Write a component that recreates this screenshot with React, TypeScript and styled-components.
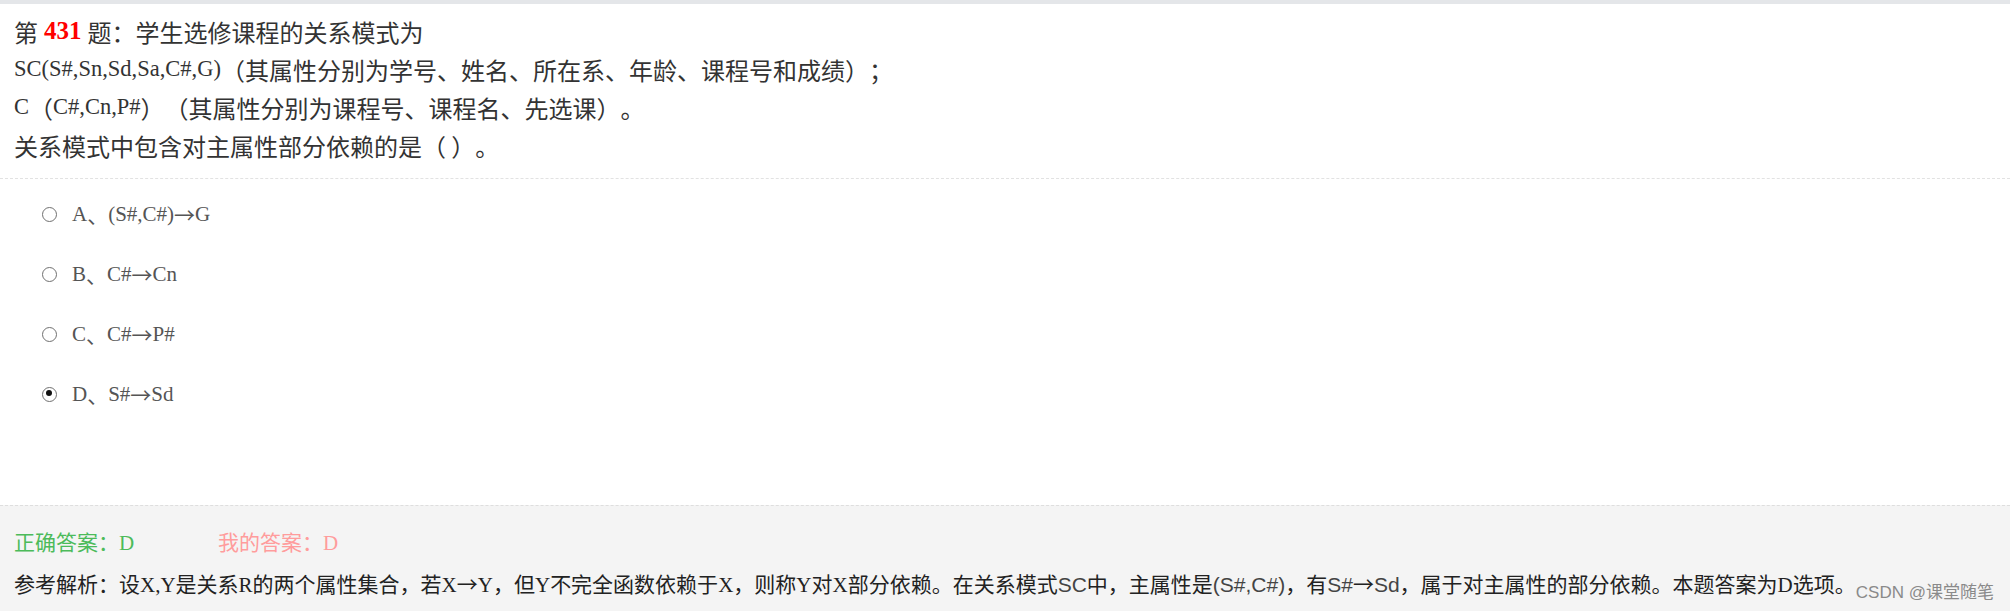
import React from "react";
import styled, { createGlobalStyle } from "styled-components";

const GlobalStyle = createGlobalStyle`
  html, body {
    margin: 0;
    padding: 0;
    background: #fff;
  }
  body {
    font-family: "Noto Sans CJK SC", "Liberation Sans", sans-serif;
    text-spacing-trim: space-all;
  }
`;

const Page = styled.div`
  position: relative;
  width: 2010px;
  height: 611px;
  display: flex;
  flex-direction: column;
  overflow: hidden;
`;

const TopBar = styled.div`
  height: 4px;
  background: #e4e6e9;
  flex: none;
`;

const Question = styled.div`
  padding: 8px 14px 14px;
  color: #333;
  border-bottom: 1px dashed #e2e2e2;
  flex: none;
`;

const Line = styled.div`
  height: 38px;
  display: flex;
  align-items: center;
  white-space: pre;
  font-family: "Liberation Serif", serif;
  font-size: 22.5px;
`;

const Cjk = styled.span<{ $size?: number }>`
  font-family: "Noto Sans CJK SC", sans-serif;
  font-size: ${({ $size }) => ($size ? `${$size}px` : "24px")};
`;

const Num = styled.b`
  color: #f00;
  font-family: "Liberation Serif", serif;
  font-size: 25px;
  margin: 0 6px;
`;

const Options = styled.div`
  padding: 5px 0 0 42px;
  flex: 1;
`;

const Option = styled.label`
  display: flex;
  align-items: center;
  height: 60px;
  gap: 15px;
  font-family: "Liberation Serif", serif;
  font-size: 21px;
  color: #555;
`;

const OptionText = styled.span`
  display: flex;
  align-items: center;
`;

const Radio = styled.span<{ $checked?: boolean }>`
  position: relative;
  box-sizing: border-box;
  width: 15px;
  height: 15px;
  border-radius: 50%;
  border: 1.8px solid #707070;
  background: #fff;
  flex: none;

  &::after {
    content: "";
    display: ${({ $checked }) => ($checked ? "block" : "none")};
    position: absolute;
    left: 2.6px;
    top: 2.6px;
    width: 6.2px;
    height: 6.2px;
    border-radius: 50%;
    background: #111;
  }
`;

const AnswerPanel = styled.div`
  height: 106px;
  flex: none;
  background: #f4f4f4;
  border-top: 1px dashed #dedede;
  padding: 20px 14px 0;
  box-sizing: border-box;
`;

const AnswerRow = styled.div`
  display: flex;
  font-size: 21px;
  line-height: 30px;
`;

const Correct = styled.span`
  color: #4cbb5a;
  width: 204px;
`;

const Mine = styled.span`
  color: #ff9c9c;
`;

const Analysis = styled.div`
  margin-top: 10px;
  font-size: 21px;
  line-height: 30px;
  color: #222;
  white-space: nowrap;
`;

const Latin = styled.span`
  font-family: "Liberation Serif", serif;
`;

const Narrow = styled.span`
  font-family: "Liberation Sans Narrow", "Liberation Sans", sans-serif;
  color: #444;
`;

const Watermark = styled.div`
  position: absolute;
  right: 16px;
  bottom: 8px;
  font-size: 17px;
  color: #8a8a8a;
  font-family: "Liberation Sans", "Noto Sans CJK SC", sans-serif;
`;

const options = [
  { key: "A", from: "(S#,C#)", to: "G" },
  { key: "B", from: "C#", to: "Cn" },
  { key: "C", from: "C#", to: "P#" },
  { key: "D", from: "S#", to: "Sd", checked: true },
];

export default function App() {
  return (
    <>
      <GlobalStyle />
      <Page>
        <TopBar />
        <Question>
          <Line>
            <Cjk>第</Cjk>
            <Num>431</Num>
            <Cjk>题：学生选修课程的关系模式为</Cjk>
          </Line>
          <Line>
            SC(S#,Sn,Sd,Sa,C#,G)
            <Cjk>（其属性分别为学号、姓名、所在系、年龄、课程号和成绩）；</Cjk>
          </Line>
          <Line>
            C<Cjk>（</Cjk>C#,Cn,P#<Cjk>）（其属性分别为课程号、课程名、先选课）。</Cjk>
          </Line>
          <Line>
            <Cjk>关系模式中包含对主属性部分依赖的是（ ）。</Cjk>
          </Line>
        </Question>
        <Options>
          {options.map((o) => (
            <Option key={o.key}>
              <Radio $checked={o.checked} />
              <OptionText>
                {o.key}
                <Cjk $size={21}>、</Cjk>
                {o.from}
                <Cjk $size={21}>→</Cjk>
                {o.to}
              </OptionText>
            </Option>
          ))}
        </Options>
        <AnswerPanel>
          <AnswerRow>
            <Correct>
              正确答案：<Latin>D</Latin>
            </Correct>
            <Mine>
              我的答案：<Latin>D</Latin>
            </Mine>
          </AnswerRow>
          <Analysis>
            参考解析：设<Latin>X,Y</Latin>是关系<Latin>R</Latin>的两个属性集合，若
            <Latin>X</Latin>→<Latin>Y</Latin>，但<Latin>Y</Latin>不完全函数依赖于<Latin>X</Latin>，则称
            <Latin>Y</Latin>对<Latin>X</Latin>部分依赖。在关系模式<Narrow>SC</Narrow>中，主属性是
            <Narrow>(S#,C#)</Narrow>，有<Narrow>S#</Narrow>→<Narrow>Sd</Narrow>，属于对主属性的部分依赖。本题答案为
            <Latin>D</Latin>选项。
          </Analysis>
        </AnswerPanel>
        <Watermark>CSDN @课堂随笔</Watermark>
      </Page>
    </>
  );
}
